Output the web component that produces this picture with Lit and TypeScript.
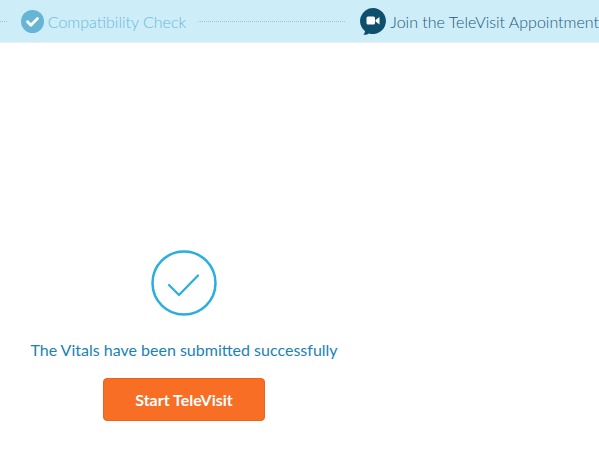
import { LitElement, html, css } from "lit";
import { customElement } from "lit/decorators.js";

@customElement("app-root")
export class AppRoot extends LitElement {
  static styles = css`
    :host { display: block; width: 599px; height: 465px; overflow: hidden; background: #fff; font-family: Lato, "Noto Sans", sans-serif; }
    .bar { display: flex; align-items: center; height: 42px; background: #cdedf9; border-bottom: 1px solid #eeeeee; padding-left: 0; box-sizing: content-box; }
    .dots { border-top: 1px dotted #9fc4d2; height: 0; }
    .d1 { width: 7px; margin-right: 14px; }
    .d2 { width: 153px; margin-left: 12px; margin-right: 15px; }
    .step { display: flex; align-items: center; font-size: 16px; font-weight: 300; white-space: nowrap; }
    .s1 { color: #6cb8d8; gap: 4px; }
    .s2 { color: #1f5a75; gap: 4px; }
    svg { display: block; flex: none; }
    .main { display: flex; flex-direction: column; align-items: center; width: 368px; padding-top: 207px; }
    .msg { margin-top: 24px; font-size: 16px; line-height: 20px; color: #1a82b4; white-space: nowrap; }
    button { margin-top: 18px; width: 162px; height: 43px; border: 1px solid #e8641f; border-radius: 4px; background: #f76e24; color: #fff; font: 700 16px Lato, sans-serif; padding: 0; }
  `;
  render() {
    return html`
      <div class="bar">
        <div class="dots d1"></div>
        <div class="step s1">
          <svg width="23" height="23" viewBox="0 0 23 23"><circle cx="11.5" cy="11.5" r="11.5" fill="#67b5d5"/><path d="M6.5 11.8l3.4 3.4 6.6-6.6" fill="none" stroke="#fff" stroke-width="2.8" stroke-linecap="round" stroke-linejoin="round"/></svg>
          <span>Compatibility Check</span>
        </div>
        <div class="dots d2"></div>
        <div class="step s2">
          <svg width="26" height="27" viewBox="0 0 26 27"><path d="M13 0a13 13 0 1 1-4 25.4C7.5 26.4 5.500 27 3.200 26.600 4.500 25.500 5 24.300 5 23.200A13 13 0 0 1 13 0z" fill="#0f4f6e"/><rect x="6.500" y="8.500" width="8.500" height="8" rx="1.500" fill="#fff"/><path d="M15.500 12l4-3v7.500l-4-3z" fill="#fff"/></svg>
          <span>Join the TeleVisit Appointment</span>
        </div>
      </div>
      <div class="main">
        <svg width="66" height="66" viewBox="0 0 66 66"><circle cx="33" cy="33" r="31.500" fill="none" stroke="#2aaee0" stroke-width="2.500"/><path d="M18 35l10 10 19-19.500" fill="none" stroke="#2aaee0" stroke-width="2.200" stroke-linecap="round" stroke-linejoin="round"/></svg>
        <div class="msg">The Vitals have been submitted successfully</div>
        <button>Start TeleVisit</button>
      </div>
    `;
  }
}
